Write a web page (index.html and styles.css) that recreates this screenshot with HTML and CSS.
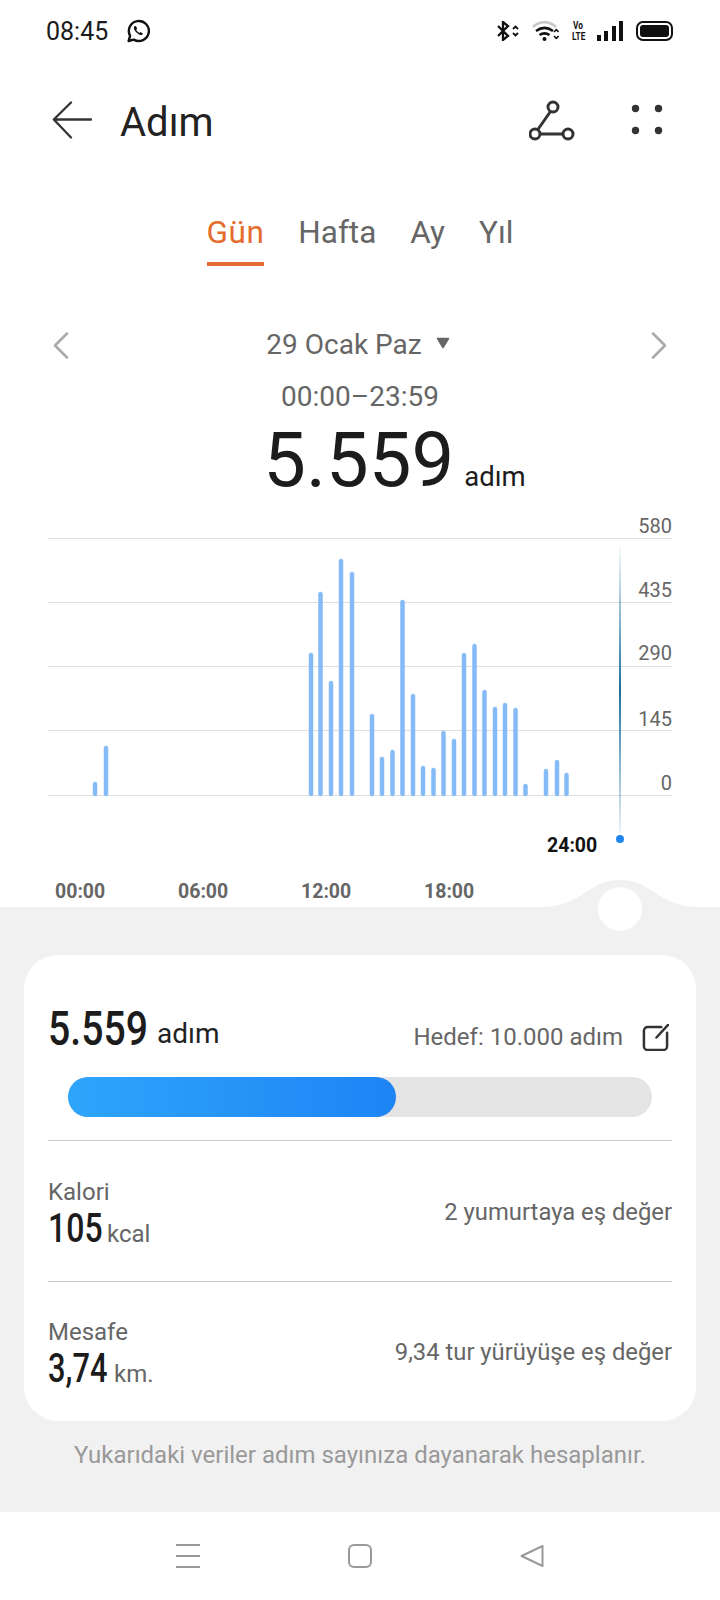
FILE: index.html
```html
<!DOCTYPE html>
<html lang="tr">
<head>
    <meta charset="utf-8">
    <title>Adım</title>
    <link rel="stylesheet" href="styles.css">
</head>
<body>
<div class="page">

    <div class="status">
        <div class="status-left">
            <span class="clock">08:45</span>
            <svg class="wa" width="24" height="24" viewBox="0 0 24 24" fill="none" stroke="#111" stroke-width="2.4" stroke-linejoin="round">
                <path d="M2.6 22l1.5-5.2A10 10 0 1 1 7.8 20.6z"/>
                <path d="M8.6 7.2c-1 .9-1 2.5.2 4.3 1.3 2 3 3.5 5 4.3 1.5.5 2.7-.1 3.1-1.4l-2.4-1.500-1.100 1c-1.400-.6-2.600-1.800-3.200-3.100l1-1.100-1.300-2.600z" fill="#111" stroke="none"/>
            </svg>
        </div>
        <div class="status-right">
            <svg class="bt" width="23" height="20" viewBox="0 0 23 20" fill="none" stroke="#111" stroke-width="2.3">
                <path d="M1 5l10 10-5 4V1l5 4L1 15"/>
                <path d="M16 8l2.500-2.500L21 8M16 12l2.500 2.500L21 12" stroke-width="1.800"/>
            </svg>
            <svg width="27" height="20" viewBox="0 0 27 20" fill="none">
                <path d="M1 6C8-.5 17-.5 24 6" stroke="#c9c9c9" stroke-width="2.500"/>
                <path d="M4 10c5.500-4 11.500-4 17 0M7.500 14c3-2 7-2 10 0" stroke="#111" stroke-width="2.600"/>
                <circle cx="12.500" cy="18" r="2" fill="#111"/>
                <path d="M22 11l2.300-2.300L26.600 11M22 15l2.300 2.300L26.600 15" stroke="#111" stroke-width="1.600"/>
            </svg>
            <span class="volte">Vo<br>LTE</span>
            <div class="signal">
                <i class="s1"></i><i class="s2"></i><i class="s3"></i><i class="s4"></i>
            </div>
            <div class="battery"><div class="battery-fill"></div></div>
        </div>
    </div>

    <div class="topbar">
        <div class="topbar-left">
            <svg width="40" height="38" viewBox="0 0 40 38" fill="none" stroke="#333" stroke-width="2.300" stroke-linecap="round" stroke-linejoin="round">
                <path d="M39 18.500H2M19 1.500L1.800 18.500 19 36.500"/>
            </svg>
            <span class="title">Adım</span>
        </div>
        <div class="topbar-right">
            <svg width="46" height="42" viewBox="0 0 46 42" fill="none" stroke="#333" stroke-width="3">
                <circle cx="24" cy="8" r="5"/>
                <circle cx="6" cy="35" r="5"/>
                <circle cx="39" cy="35" r="5"/>
                <path d="M21.500 12.500L8.500 31M11 35h23"/>
            </svg>
            <svg width="32" height="32" viewBox="0 0 32 32" fill="#333">
                <circle cx="4.500" cy="4.500" r="3.700"/>
                <circle cx="27.500" cy="4.500" r="3.700"/>
                <circle cx="4.500" cy="26.500" r="3.700"/>
                <circle cx="27.500" cy="26.500" r="3.700"/>
            </svg>
        </div>
    </div>

    <div class="tabs">
        <div class="tab active">Gün</div>
        <div class="tab">Hafta</div>
        <div class="tab">Ay</div>
        <div class="tab">Yıl</div>
    </div>

    <div class="date-row">
        <svg width="16" height="27" viewBox="0 0 16 27" fill="none" stroke="#aaa" stroke-width="2.500" stroke-linecap="round" stroke-linejoin="round">
            <path d="M14 1.500L2 13.500l12 12"/>
        </svg>
        <div class="date">
            <span>29 Ocak Paz</span>
            <svg class="caret" width="14" height="12" viewBox="0 0 14 12" fill="#666" stroke="#666" stroke-width="1.500" stroke-linejoin="round">
                <path d="M1.500 1.500h11L7 10.500z"/>
            </svg>
        </div>
        <svg width="16" height="27" viewBox="0 0 16 27" fill="none" stroke="#aaa" stroke-width="2.500" stroke-linecap="round" stroke-linejoin="round">
            <path d="M2 1.500l12 12-12 12"/>
        </svg>
    </div>

    <div class="range">00:00–23:59</div>

    <div class="total">
        <span class="total-num">5.559</span>
        <span class="total-unit">adım</span>
    </div>

    <!-- viewBox follows page coordinates so the bars can be read off the screenshot -->
    <svg class="chart" width="720" height="407" viewBox="0 500 720 407">
        <defs>
            <linearGradient id="cursor" x1="0" y1="0" x2="0" y2="1">
                <stop offset="0" stop-color="#1b6f9f" stop-opacity="0"/>
                <stop offset="0.5" stop-color="#1b6f9f"/>
                <stop offset="1" stop-color="#1b6f9f" stop-opacity="0.05"/>
            </linearGradient>
        </defs>

        <g class="grid">
            <rect x="48" y="538" width="624" height="1"/>
            <rect x="48" y="602" width="624" height="1"/>
            <rect x="48" y="666" width="624" height="1"/>
            <rect x="48" y="730" width="624" height="1"/>
            <rect x="48" y="795" width="624" height="1"/>
        </g>

        <g class="bars">
            <rect x="93" y="782" width="4" height="14" rx="2"/>
            <rect x="104" y="746" width="4" height="50" rx="2"/>
            <rect x="309" y="653" width="4" height="143" rx="2"/>
            <rect x="318.500" y="592" width="4" height="204" rx="2"/>
            <rect x="329" y="681" width="4" height="115" rx="2"/>
            <rect x="339" y="559" width="4" height="237" rx="2"/>
            <rect x="350" y="572" width="4" height="224" rx="2"/>
            <rect x="370" y="714" width="4" height="82" rx="2"/>
            <rect x="380" y="757" width="4" height="39" rx="2"/>
            <rect x="390.500" y="750" width="4" height="46" rx="2"/>
            <rect x="400.500" y="600" width="4" height="196" rx="2"/>
            <rect x="411" y="694" width="4" height="102" rx="2"/>
            <rect x="421" y="766" width="4" height="30" rx="2"/>
            <rect x="431.500" y="768" width="4" height="28" rx="2"/>
            <rect x="441.500" y="731" width="4" height="65" rx="2"/>
            <rect x="452" y="739" width="4" height="57" rx="2"/>
            <rect x="462" y="653" width="4" height="143" rx="2"/>
            <rect x="472.500" y="644" width="4" height="152" rx="2"/>
            <rect x="482.500" y="690" width="4" height="106" rx="2"/>
            <rect x="493" y="707" width="4" height="89" rx="2"/>
            <rect x="503" y="703" width="4" height="93" rx="2"/>
            <rect x="513.500" y="708" width="4" height="88" rx="2"/>
            <rect x="523.500" y="784" width="4" height="12" rx="2"/>
            <rect x="544" y="769" width="4" height="27" rx="2"/>
            <rect x="555" y="760" width="4" height="36" rx="2"/>
            <rect x="564.500" y="773" width="4" height="23" rx="2"/>
        </g>

        <rect x="619" y="543" width="2" height="294" fill="url(#cursor)"/>
        <circle cx="620" cy="839" r="4" fill="#1e86ee"/>

        <g class="y-labels">
            <text x="672" y="533">580</text>
            <text x="672" y="597">435</text>
            <text x="672" y="660">290</text>
            <text x="672" y="726">145</text>
            <text x="672" y="790">0</text>
        </g>

        <text class="now-label" x="547" y="852">24:00</text>

        <g class="x-labels">
            <text x="55" y="898">00:00</text>
            <text x="178" y="898">06:00</text>
            <text x="301" y="898">12:00</text>
            <text x="424" y="898">18:00</text>
        </g>
    </svg>

    <div class="sheet">
        <svg class="bump" width="160" height="28" viewBox="0 0 160 28">
            <path d="M0 28C44 28 46 1 80 1s36 27 80 27z" fill="#f1f1f1"/>
        </svg>
        <div class="knob"></div>

        <div class="card">
            <div class="card-head">
                <div class="steps">
                    <span class="num num-lg">5.559</span>
                    <span class="steps-unit">adım</span>
                </div>
                <div class="goal">
                    <span>Hedef: 10.000 adım</span>
                    <svg width="27" height="27" viewBox="0 0 28 28" fill="none" stroke="#333" stroke-width="2.600" stroke-linecap="round">
                        <path d="M20 3H6a4 4 0 0 0-4 4v16a4 4 0 0 0 4 4h16a4 4 0 0 0 4-4V9"/>
                        <path d="M27 1L15 14"/>
                    </svg>
                </div>
            </div>

            <div class="progress"><div class="progress-fill" style="width: 56.2%"></div></div>

            <div class="stat">
                <div>
                    <div class="stat-label">Kalori</div>
                    <div class="stat-value"><span class="num num-md w-105">105</span><span class="stat-unit">kcal</span></div>
                </div>
                <div class="stat-note">2 yumurtaya eş değer</div>
            </div>

            <div class="stat">
                <div>
                    <div class="stat-label">Mesafe</div>
                    <div class="stat-value"><span class="num num-md w-374">3,74</span><span class="stat-unit">km.</span></div>
                </div>
                <div class="stat-note">9,34 tur yürüyüşe eş değer</div>
            </div>
        </div>

        <div class="note">Yukarıdaki veriler adım sayınıza dayanarak hesaplanır.</div>
    </div>

    <div class="navbar">
        <svg width="24" height="24" viewBox="0 0 24 24" fill="#999">
            <rect y="0" width="24" height="2"/>
            <rect y="11" width="24" height="2"/>
            <rect y="22" width="24" height="2"/>
        </svg>
        <svg width="24" height="24" viewBox="0 0 24 24" fill="none" stroke="#999" stroke-width="2">
            <rect x="1" y="1" width="22" height="22" rx="5"/>
        </svg>
        <svg width="24" height="24" viewBox="0 0 24 24" fill="none" stroke="#999" stroke-width="2" stroke-linejoin="round">
            <path d="M22.500 2v20L1.500 12z"/>
        </svg>
    </div>

</div>
</body>
</html>
```

FILE: styles.css
```css
* {
    box-sizing: border-box;
}

body {
    margin: 0;
    background: #fff;
    font-family: Roboto, "Liberation Sans", sans-serif;
    color: #222;
}

.page {
    width: 720px;
    height: 1600px;
    display: flex;
    flex-direction: column;
    overflow: hidden;
}

/* status bar */
.status {
    height: 62px;
    padding: 0 47px 0 46px;
    display: flex;
    align-items: center;
    justify-content: space-between;
}

.status-left {
    display: flex;
    align-items: center;
    gap: 18px;
}

.clock {
    font-size: 25px;
    color: #1c1c1c;
}

.status-right {
    display: flex;
    align-items: center;
    gap: 11px;
}

.bt {
    margin-right: 1px;
}

.volte {
    display: inline-block;
    width: 16px;
    font-size: 11px;
    line-height: 11px;
    font-weight: 700;
    color: #111;
    text-align: center;
    white-space: nowrap;
    transform: scaleX(0.75);
}

.signal {
    width: 26px;
    height: 20px;
    margin-right: 2px;
    display: flex;
    align-items: flex-end;
    justify-content: space-between;
}

.signal i {
    width: 4px;
    background: #111;
}

.s1 { height: 6px; }
.s2 { height: 10px; }
.s3 { height: 15px; }
.s4 { height: 20px; }

.battery {
    width: 37px;
    height: 20px;
    padding: 2px;
    border: 2px solid #111;
    border-radius: 7px;
}

.battery-fill {
    height: 100%;
    background: #111;
    border-radius: 3px;
}

/* title bar */
.topbar {
    height: 116px;
    padding: 0 57px 0 52px;
    display: flex;
    align-items: center;
    justify-content: space-between;
}

.topbar-left {
    display: flex;
    align-items: center;
    gap: 28px;
}

.topbar-right {
    display: flex;
    align-items: center;
    gap: 56px;
}

.title {
    font-size: 40px;
    margin-top: 4px;
}

/* tabs */
.tabs {
    margin-top: 37px;
    display: flex;
    justify-content: center;
    gap: 34px;
    font-size: 31.500px;
    line-height: 36px;
    color: #666;
}

.tab {
    padding-bottom: 15px;
}

.tab.active {
    color: #e56c2e;
    letter-spacing: 0.5px;
    border-bottom: 4px solid #e56c2e;
    padding-bottom: 11px;
}

/* date */
.date-row {
    margin-top: 61px;
    padding: 0 53px;
    height: 36px;
    display: flex;
    align-items: center;
    justify-content: space-between;
    font-size: 28px;
    line-height: 36px;
    color: #666;
}

.date {
    display: flex;
    align-items: center;
    gap: 14px;
    margin-right: 4px;
}

.caret {
    margin-bottom: 4px;
}

.range {
    margin-top: 16px;
    text-align: center;
    font-size: 28px;
    line-height: 36px;
    color: #666;
}

.total {
    margin-top: 5px;
    height: 80px;
    display: flex;
    align-items: baseline;
    justify-content: center;
    gap: 10px;
    padding-left: 69px;
    color: #1c1c1c;
}

.total-num {
    font-size: 76px;
    line-height: 80px;
}

.total-unit {
    font-size: 27.500px;
}

/* chart */
.chart {
    display: block;
    flex: none;
}

.grid rect {
    fill: #dedede;
}

.bars rect {
    fill: #84baf5;
    stroke: #84baf5;
    stroke-width: 0.5;
}

.y-labels text {
    font-size: 20px;
    fill: #666;
    text-anchor: end;
}

.now-label {
    font-size: 19.500px;
    font-weight: 700;
    fill: #111;
}

.x-labels text {
    font-size: 19.500px;
    font-weight: 700;
    fill: #666;
}

/* bottom sheet */
.sheet {
    flex: 1;
    position: relative;
    background: #f1f1f1;
    padding: 48px 24px 0;
}

.bump {
    position: absolute;
    left: 540px;
    top: -28px;
}

.knob {
    position: absolute;
    left: 598px;
    top: -20px;
    width: 44px;
    height: 44px;
    border-radius: 50%;
    background: #fff;
}

.card {
    height: 466px;
    padding: 46px 24px 0;
    background: #fff;
    border-radius: 34px;
}

.card-head {
    height: 56px;
    display: flex;
    align-items: baseline;
    justify-content: space-between;
}

/* the number font in the reference is narrower than anything installed */
.num {
    display: inline-block;
    font-weight: 500;
    color: #1c1c1c;
    transform: scaleX(0.8);
    transform-origin: left;
}

.num-lg {
    font-size: 49px;
    line-height: 56px;
    width: 105px;
}

.steps-unit {
    font-size: 28px;
    vertical-align: 2px;
}

.goal {
    display: flex;
    align-items: baseline;
    gap: 19px;
    margin-right: 3px;
    font-size: 24px;
    color: #666;
}

.goal svg {
    align-self: center;
}

.progress {
    margin: 20px 20px 0;
    height: 40px;
    background: #e4e4e4;
    border-radius: 20px;
}

.progress-fill {
    height: 100%;
    background: linear-gradient(90deg, #2ea5fb, #1e84f5);
    border-radius: 20px;
}

.stat {
    margin-top: 23px;
    height: 141px;
    padding-top: 11px;
    border-top: 1px solid #ccc;
    display: flex;
    align-items: center;
    justify-content: space-between;
}

.stat + .stat {
    margin-top: 0;
    padding-top: 9px;
}

.stat-label {
    font-size: 24px;
    line-height: 30px;
    color: #666;
}

.stat-value {
    display: flex;
    align-items: baseline;
    line-height: 44px;
}

.num-md {
    font-size: 40px;
}

.w-105 {
    width: 59px;
}

.w-374 {
    width: 66px;
    transform: scaleX(0.77);
}

.stat-unit {
    font-size: 24px;
    color: #666;
}

.stat-note {
    margin-bottom: 10px;
    font-size: 23.800px;
    line-height: 30px;
    color: #666;
}

.note {
    margin-top: 19px;
    text-align: center;
    font-size: 24px;
    line-height: 30px;
    color: #999;
}

/* navigation bar */
.navbar {
    height: 88px;
    flex: none;
    background: #fff;
    padding: 0 176px 0 176px;
    display: flex;
    align-items: center;
    justify-content: space-between;
}
```
